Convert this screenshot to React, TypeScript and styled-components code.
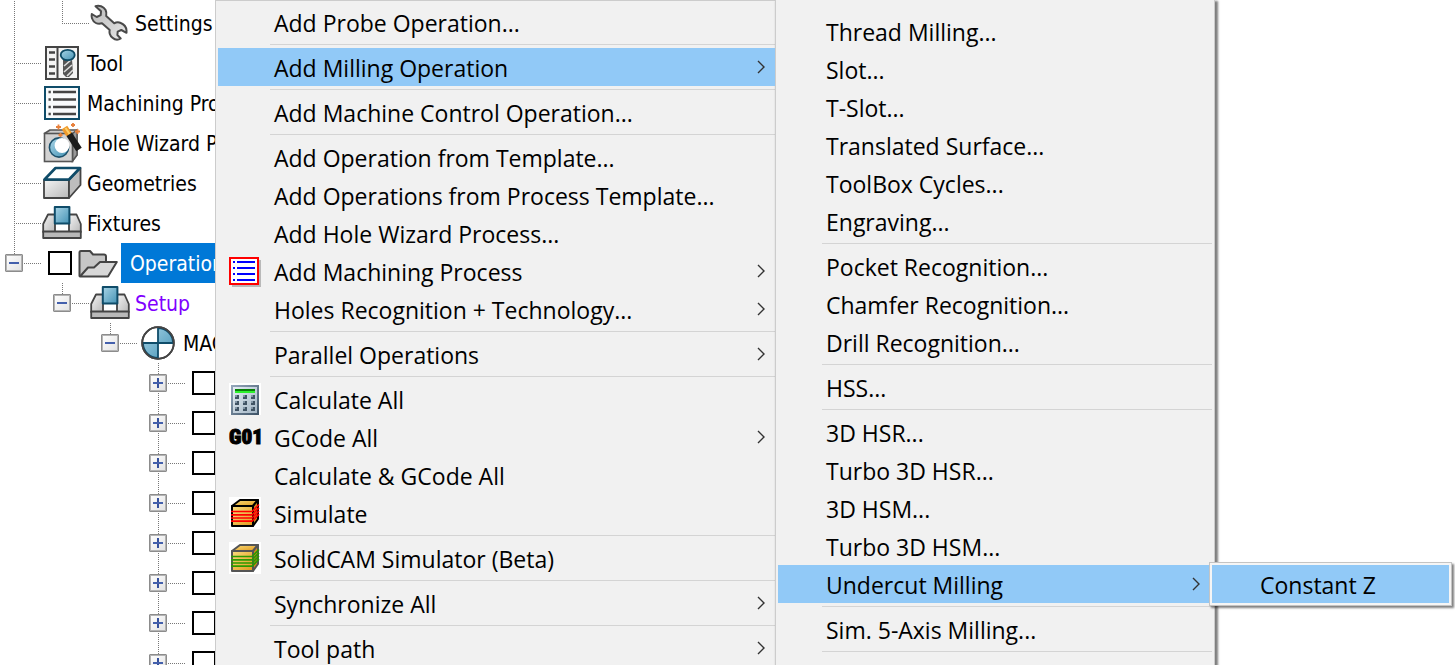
import React from "react";
import styled, { createGlobalStyle, css } from "styled-components";

const GlobalStyle = createGlobalStyle`
  *, *::before, *::after { box-sizing: border-box; }
  body { margin: 0; background: #fff; color: #000; overflow: hidden; }
  button { font: inherit; color: inherit; }
`;

const Page = styled.main`
  position: relative;
  height: 100vh;
  overflow: hidden;
`;

/* ---------- Tree ---------- */

const Tree = styled.ul`
  list-style: none;
  margin: -37px 0 0;
  padding: 0;
  font-family: "DejaVu Sans Condensed", "DejaVu Sans", sans-serif;
  font-size: 21px;
  line-height: 40px;
`;

const TreeRow = styled.li`
  display: flex;
  align-items: center;
  height: 40px;
  white-space: nowrap;
`;

type GuideKind = "blank" | "line" | "tee" | "end";

const dotsDown = "repeating-linear-gradient(to bottom, #777 0 1px, transparent 1px 2px)";
const dotsAcross = "repeating-linear-gradient(to right, #777 0 1px, transparent 1px 2px)";

const guideBackground: Record<GuideKind, ReturnType<typeof css>> = {
  blank: css``,
  line: css`background: ${dotsDown} 14px 0 / 1px 100% no-repeat;`,
  tee: css`
    background: ${dotsDown} 14px 0 / 1px 100% no-repeat,
      ${dotsAcross} 14px 20px / 28px 1px no-repeat;
  `,
  end: css`
    background: ${dotsDown} 14px 0 / 1px 20px no-repeat,
      ${dotsAcross} 14px 20px / 28px 1px no-repeat;
  `,
};

const Guide = styled.span<{ $kind: GuideKind; $last?: boolean }>`
  flex: none;
  display: flex;
  align-items: center;
  width: ${(p) => (p.$last ? 42 : 48)}px;
  height: 40px;
  padding-left: 5px;
  ${(p) => guideBackground[p.$kind]}
`;

const Expander = styled.button<{ $open: boolean }>`
  display: grid;
  place-items: center;
  width: 18px;
  height: 18px;
  padding: 0;
  border: 1px solid #8c8c8c;
  border-radius: 1px;
  outline: 1px solid #b4b4b4;
  outline-offset: -2px;
  background:
    linear-gradient(#4460ac, #4460ac) center / 10px 2px no-repeat,
    linear-gradient(#35509c, #35509c) center / 2px ${(p) => (p.$open ? 0 : 10)}px no-repeat,
    linear-gradient(135deg, #fff, #e2e2e2);
`;

const Check = styled.input`
  appearance: none;
  flex: none;
  width: 24px;
  height: 24px;
  margin: 0 6px;
  border: 2px solid #000;
  background: #fff;
`;

const TreeIcon = styled.svg`
  flex: none;
  width: 40px;
  height: 40px;
  margin-right: 3px;
`;

const TreeLabel = styled.span<{ $selected?: boolean; $color?: string }>`
  height: 40px;
  padding: 1px 2px 0;
  color: ${(p) => p.$color ?? "#000"};
  ${(p) =>
    p.$selected &&
    css`
      padding: 1px 9px 0;
      background: #0078d7;
      color: #fff;
    `}
`;

/* ---------- Menus ---------- */

const MenuLayer = styled.div`
  position: absolute;
  inset: 0 0 0 215px;
  display: flex;
  font-family: "Open Sans", "Noto Sans", sans-serif;
  font-size: 23px;
  line-height: 38px;
`;

const Menu = styled.div<{ $width: number; $inset: number; $arrow: number; $cutTop?: boolean }>`
  --inset: ${(p) => p.$inset}px;
  --arrow: ${(p) => p.$arrow}px;
  flex: none;
  width: ${(p) => p.$width}px;
  min-height: calc(100% + 8px);
  padding: ${(p) => (p.$cutTop ? "12px 2px 2px" : "2px")};
  border: 1px solid #ccc;
  border-top-width: ${(p) => (p.$cutTop ? 0 : 1)}px;
  background: #f1f1f1;

  & + & {
    margin-left: -3px;
    box-shadow: 2px 2px 2px 1px rgba(0, 0, 0, 0.5);
  }
`;

const Entry = styled.div`
  position: relative;
`;

const Item = styled.button<{ $active?: boolean }>`
  display: flex;
  align-items: center;
  width: 100%;
  height: 38px;
  padding: 0 var(--arrow) 0 0;
  border: 0;
  background: ${(p) => (p.$active ? "#91c9f7" : "transparent")};
  text-align: left;
  white-space: nowrap;
`;

const IconCell = styled.span`
  flex: none;
  display: flex;
  align-items: center;
  width: var(--inset);
  height: 38px;
  padding-left: 11px;
`;

const ItemText = styled.span`
  flex: 1;
  height: 38px;
  padding-top: 1px;
`;

const Separator = styled.hr`
  height: 1px;
  margin: 3px 0 3px calc(var(--inset) - 4px);
  border: 0;
  background: #d4d4d4;
`;

const Flyout = styled.div`
  --inset: 48px;
  --arrow: 12px;
  position: absolute;
  top: -3px;
  left: calc(100% - 3px);
  width: 243px;
  padding: 2px;
  border: 1px solid #c4c4c4;
  background: #f5f5f5;
  box-shadow: 2px 2px 2px rgba(0, 0, 0, 0.5);
`;

const GCodeMark = styled.span`
  font-family: "Roboto Condensed", Roboto, sans-serif;
  font-size: 21px;
  font-weight: 900;
  -webkit-text-stroke: 1px #000;
`;

/* ---------- Drawings ---------- */

const Gradients = () => (
  <svg width="0" height="0" style={{ position: "absolute" }} aria-hidden="true">
    <defs>
      <linearGradient id="steel" x1="0" y1="0" x2="1" y2="1">
        <stop offset="0" stopColor="#f4f4f4" />
        <stop offset="1" stopColor="#b8b8b8" />
      </linearGradient>
      <linearGradient id="grey" x1="0" y1="0" x2="1" y2="1">
        <stop offset="0" stopColor="#b8b8b8" />
        <stop offset="1" stopColor="#e8e8e8" />
      </linearGradient>
      <linearGradient id="blue" x1="0" y1="0" x2="1" y2="1">
        <stop offset="0" stopColor="#a8d4e6" />
        <stop offset="1" stopColor="#4593b5" />
      </linearGradient>
      <linearGradient id="slate" x1="0" y1="0" x2="1" y2="1">
        <stop offset="0" stopColor="#93a6ba" />
        <stop offset="1" stopColor="#3f5468" />
      </linearGradient>
      <linearGradient id="panel" x1="0" y1="0" x2="1" y2="1">
        <stop offset="0" stopColor="#e8f0f6" />
        <stop offset="1" stopColor="#9fb2c2" />
      </linearGradient>
      <linearGradient id="gold" x1="0" y1="0" x2="1" y2="1">
        <stop offset="0" stopColor="#f8dc7c" />
        <stop offset="1" stopColor="#e29a1c" />
      </linearGradient>
    </defs>
  </svg>
);

const drawings: Record<string, React.ReactNode> = {
  wrench: (
    <path
      d="M5.5 3.2C9 1.8 13.500 3.500 15.600 7c1 1.900 .9 4.200 .6 6l8 7.300c2.300-1.300 4.600-1.200 6.600-.3 3.200 1.300 5.500 4.500 5.700 7.500v2.300l-5.200-2.800-3.600 1.600-.3 3.400 3.300 3.500c-2.700 1.900-5.700 1.500-8.200-.8-2.700-2.200-3.600-4.700-2.800-7.700L12 20.300c-4.600 1.300-8.600-.7-10-5-.6-1.600-.5-3-.2-4.300L6.700 14l4-1.800.3-4z"
      fill="url(#grey)" stroke="#4a4a4a" strokeWidth="2" strokeLinejoin="round"
    />
  ),
  tool: (
    <g>
      <rect x="4" y="4" width="32" height="32" fill="#f4f4f4" stroke="#444" strokeWidth="2" />
      <path d="M15.500 4v32" stroke="#444" strokeWidth="2" />
      <path d="M7 9.500h6M7 16.500h6M7 23.500h6M7 30.500h6" stroke="#444" strokeWidth="2.400" />
      <path d="M21 16h9l1 14-4 4h-3l-3-3z" fill="#555" />
      <path d="M22 23l7-6M22 29l8-7M25 33l6-6" stroke="#ddd" strokeWidth="1.600" />
      <ellipse cx="25.700" cy="12" rx="7" ry="5.200" fill="url(#blue)" stroke="#0d4a66" strokeWidth="1.800" />
    </g>
  ),
  process: (
    <g>
      <rect x="3" y="4" width="34" height="32" fill="#f8fafb" stroke="#0f4c69" strokeWidth="2" />
      <path d="M11 9h23M11 16.500h23M11 24h23M11 31h23" stroke="#444" strokeWidth="2.400" />
      <path d="M6.500 9h2.300M6.500 16.500h2.300M6.500 24h2.300M6.500 31h2.300" stroke="#444" strokeWidth="2.400" />
    </g>
  ),
  wizard: (
    <g>
      <path d="M2.500 10.500L8 7h27v25l-4.500 6z" fill="#ccc" stroke="#555" strokeWidth="1.600" strokeLinejoin="round" />
      <path d="M30.500 10.500L35 7v25l-4.500 6z" fill="#999" stroke="#555" strokeWidth="1.400" />
      <rect x="2.500" y="10.500" width="28" height="28" fill="#d2d2d2" stroke="#555" strokeWidth="1.600" />
      <circle cx="17" cy="24.500" r="9.600" fill="url(#blue)" stroke="#1c516c" strokeWidth="1.600" />
      <circle cx="20" cy="22.500" r="7.400" fill="#fff" />
      <path d="M27 11l10 15.500" stroke="#1c1c1c" strokeWidth="6.500" />
      <path d="M22.500 4.500l4.500 7" stroke="#ef9a2b" strokeWidth="6.500" />
      <path d="M23.500 5l4 6" stroke="#fbcf6a" strokeWidth="2" />
      <path d="M16.500 1.500v5M14 4h5M31 0v4M29 2h4M35.500 6v5M33 8.500h5M18.500 10v4M16.500 12h4" stroke="#e8813c" strokeWidth="1.800" />
    </g>
  ),
  geometry: (
    <g strokeLinejoin="round">
      <path d="M2 17h25v18H2z" fill="url(#steel)" stroke="#444" strokeWidth="1.800" />
      <path d="M27 17L38.500 5v17L27 35z" fill="#bdbdbd" stroke="#444" strokeWidth="1.800" />
      <path d="M13.500 5h24.500L27 16.500H2.500z" fill="#fff" stroke="#0f4c69" strokeWidth="2.600" />
    </g>
  ),
  fixture: (
    <g strokeLinejoin="round">
      <path d="M1.200 29v-8L6 11.500h7V29z" fill="url(#steel)" stroke="#444" strokeWidth="1.800" />
      <path d="M38.800 29v-8L34.500 11.500H27V29z" fill="url(#steel)" stroke="#444" strokeWidth="1.800" />
      <rect x="1.200" y="28.500" width="37.600" height="6.500" fill="#b9b9b9" stroke="#444" strokeWidth="1.800" />
      <rect x="12.800" y="4" width="14.600" height="16.500" fill="url(#blue)" stroke="#0f4c69" strokeWidth="2" />
    </g>
  ),
  folder: (
    <g strokeLinejoin="round" stroke="#444" strokeWidth="2">
      <path d="M1.500 33V9.500q0-1.500 1.500-1.500h9l3 3.500h11q2 0 2 2V24L4 33z" fill="#c6c6c6" />
      <path d="M2 33.500l8-9h6l6-5.500h16.800L30 33.500z" fill="#d8d8d8" />
    </g>
  ),
  origin: (
    <g>
      <circle cx="20" cy="20" r="15.800" fill="#fff" stroke="#444" strokeWidth="1.800" />
      <path d="M20 20V5a15 15 0 0 1 15 15zM20 20v15A15 15 0 0 1 5 20z" fill="url(#blue)" stroke="#0f4c69" strokeWidth="1.800" />
      <circle cx="20" cy="20" r="15.800" fill="none" stroke="#444" strokeWidth="1.800" />
    </g>
  ),
  machining: (
    <g>
      <path d="M3 5h29v27H3z" fill="#b9b9b9" />
      <rect x="1" y="3" width="28" height="26" fill="#fff" stroke="#f00" strokeWidth="2" />
      <path d="M8 7h18M8 13h18M8 19h18M8 25h18M4 7h2M4 13h2M4 19h2M4 25h2" stroke="#00f" strokeWidth="2" />
    </g>
  ),
  calculator: (
    <g>
      <path d="M0 0h32v32H0z" fill="#fff" />
      <rect x="3" y="3" width="26" height="28" fill="url(#panel)" stroke="url(#slate)" strokeWidth="2" />
      <path d="M6 6h20v2H6z" fill="#0a7d0a" />
      <path d="M6 8h20v2H6z" fill="#2cf02c" />
      {[12, 18, 24].map((y) =>
        [6, 14, 22].map((x) => (
          <g key={`${x}-${y}`}>
            <path d={`M${x} ${y}h4v4h-4z`} fill="#405364" />
            <path d={`M${x} ${y}h2v2h-2z`} fill="#8295a6" />
          </g>
        ))
      )}
    </g>
  ),
};

const cube = (edge: string, cut: string) => (
  <g strokeLinejoin="round">
    <path d="M0 0h32v32H0z" fill="#fff" />
    <path d="M3 9l8-6h18l-5 6z" fill="url(#gold)" stroke={edge} strokeWidth="2" />
    <path d="M24 9l5-6v19l-5 7z" fill="#d08a1a" stroke={edge} strokeWidth="2" />
    <path d="M3 9h21v20H3z" fill="url(#gold)" stroke={edge} strokeWidth="2" />
    <path d="M2 14.500h21l7-7M2 17.800h21l7-7M2 21h21l7-7M2 24.200h21l7-7" fill="none" stroke={cut} strokeWidth="1.700" />
  </g>
);
drawings.simulate = cube("#000", "#f00");
drawings.simulator = cube("#555", "#2c9a00");

const MenuIcon = ({ name }: { name: string }) =>
  name === "gcode" ? (
    <GCodeMark>G01</GCodeMark>
  ) : (
    <svg width="33" height="32" viewBox="0 0 33 32" aria-hidden="true">{drawings[name]}</svg>
  );

const Arrow = () => (
  <svg width="8" height="14" viewBox="0 0 8 14" aria-hidden="true">
    <path d="M1 1l6 6-6 6" fill="none" stroke="#333" strokeWidth="1.400" />
  </svg>
);

/* ---------- Data ---------- */

type Node = {
  label: string;
  guides: GuideKind[];
  icon?: string;
  open?: boolean;
  check?: boolean;
  selected?: boolean;
  color?: string;
};

const nodes: Node[] = [
  { label: "", guides: ["line", "line"] },
  { label: "Settings", guides: ["line", "end"], icon: "wrench" },
  { label: "Tool", guides: ["tee"], icon: "tool" },
  { label: "Machining Process", guides: ["tee"], icon: "process" },
  { label: "Hole Wizard Process", guides: ["tee"], icon: "wizard" },
  { label: "Geometries", guides: ["tee"], icon: "geometry" },
  { label: "Fixtures", guides: ["tee"], icon: "fixture" },
  { label: "Operations", guides: ["end"], icon: "folder", open: true, check: true, selected: true },
  { label: "Setup", guides: ["blank", "end"], icon: "fixture", open: true, color: "#8000ff" },
  { label: "MAC 1", guides: ["blank", "blank", "end"], icon: "origin", open: true },
  ...Array.from({ length: 8 }, (): Node => ({
    label: "", guides: ["blank", "blank", "blank", "tee"], open: false, check: true,
  })),
];

type MenuEntry = { text: string; icon?: string; arrow?: boolean; active?: boolean; flyout?: string[] } | null;

const mainMenu: MenuEntry[] = [
  { text: "Add Probe Operation..." },
  null,
  { text: "Add Milling Operation", arrow: true, active: true },
  null,
  { text: "Add Machine Control Operation..." },
  null,
  { text: "Add Operation from Template..." },
  { text: "Add Operations from Process Template..." },
  { text: "Add Hole Wizard Process..." },
  { text: "Add Machining Process", icon: "machining", arrow: true },
  { text: "Holes Recognition + Technology...", arrow: true },
  null,
  { text: "Parallel Operations", arrow: true },
  null,
  { text: "Calculate All", icon: "calculator" },
  { text: "GCode All", icon: "gcode", arrow: true },
  { text: "Calculate & GCode All" },
  { text: "Simulate", icon: "simulate" },
  null,
  { text: "SolidCAM Simulator (Beta)", icon: "simulator" },
  null,
  { text: "Synchronize All", arrow: true },
  null,
  { text: "Tool path", arrow: true },
];

const millingMenu: MenuEntry[] = [
  { text: "Thread Milling..." },
  { text: "Slot..." },
  { text: "T-Slot..." },
  { text: "Translated Surface..." },
  { text: "ToolBox Cycles..." },
  { text: "Engraving..." },
  null,
  { text: "Pocket Recognition..." },
  { text: "Chamfer Recognition..." },
  { text: "Drill Recognition..." },
  null,
  { text: "HSS..." },
  null,
  { text: "3D HSR..." },
  { text: "Turbo 3D HSR..." },
  { text: "3D HSM..." },
  { text: "Turbo 3D HSM..." },
  { text: "Undercut Milling", arrow: true, active: true, flyout: ["Constant Z"] },
  null,
  { text: "Sim. 5-Axis Milling..." },
  null,
];

const MenuEntries = ({ entries }: { entries: MenuEntry[] }) => (
  <>
    {entries.map((entry, i) =>
      entry === null ? (
        <Separator key={i} />
      ) : (
        <Entry key={i}>
          <Item type="button" role="menuitem" $active={entry.active}>
            <IconCell>{entry.icon && <MenuIcon name={entry.icon} />}</IconCell>
            <ItemText>{entry.text}</ItemText>
            {entry.arrow && <Arrow />}
          </Item>
          {entry.flyout && (
            <Flyout role="menu" aria-label={entry.text}>
              <MenuEntries entries={entry.flyout.map((text) => ({ text, active: true }))} />
            </Flyout>
          )}
        </Entry>
      )
    )}
  </>
);

export default function App() {
  return (
    <Page>
      <GlobalStyle />
      <Gradients />
      <Tree>
        {nodes.map((node, i) => (
          <TreeRow key={i}>
            {node.guides.map((kind, g) => {
              const last = g === node.guides.length - 1;
              return (
                <Guide key={g} $kind={kind} $last={last}>
                  {last && node.open !== undefined && (
                    <Expander type="button" $open={node.open} aria-label={node.open ? "Collapse" : "Expand"} />
                  )}
                </Guide>
              );
            })}
            {node.check && <Check type="checkbox" aria-label={node.label || "Operation"} />}
            {node.icon && <TreeIcon viewBox="0 0 40 40" aria-hidden="true">{drawings[node.icon]}</TreeIcon>}
            {node.label && (
              <TreeLabel $selected={node.selected} $color={node.color}>{node.label}</TreeLabel>
            )}
          </TreeRow>
        ))}
      </Tree>
      <MenuLayer>
        <Menu role="menu" aria-label="Operations" $width={563} $inset={56} $arrow={10}>
          <MenuEntries entries={mainMenu} />
        </Menu>
        <Menu role="menu" aria-label="Milling operations" $width={440} $inset={48} $arrow={12} $cutTop>
          <MenuEntries entries={millingMenu} />
        </Menu>
      </MenuLayer>
    </Page>
  );
}
